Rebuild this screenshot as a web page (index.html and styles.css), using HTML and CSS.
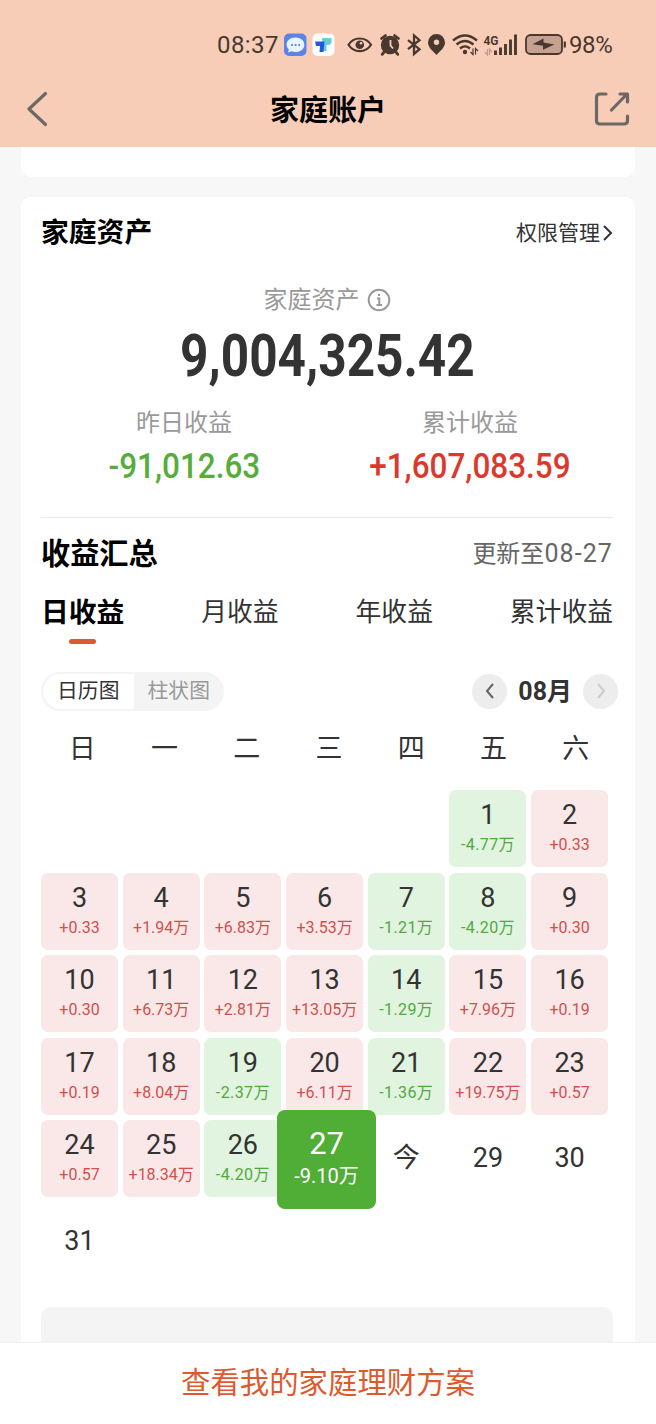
FILE: index.html
```
<!DOCTYPE html>
<html lang="zh-CN">
<head>
  <meta charset="UTF-8">
  <title>家庭账户</title>
  <link rel="stylesheet" href="styles.css">
</head>
<body>
  <header class="header">
    <div class="status">
      <span class="time">08:37</span>
      <svg width="62" height="30" viewBox="280 30 62 30">
        <rect x="284" y="33.5" width="22.5" height="22.5" rx="5" fill="#5b84e8"/>
        <path d="M295.5 37.5c5.200 0 8.800 3 8.800 7.200s-3.600 7.300-8.800 7.300c-1.500 0-2.900-.2-4.100-.7l-3.400 1.100.9-3.100c-1.500-1.200-2.300-2.800-2.300-4.600 0-4.200 3.700-7.200 8.900-7.200z" fill="#e9f4ff"/>
        <g fill="#4d79dd"><circle cx="292" cy="45" r="1"/><circle cx="295.600" cy="45" r="1"/><circle cx="299.200" cy="45" r="1"/></g>
        <rect x="312.500" y="33.500" width="22" height="22.500" rx="5" fill="#fff"/>
        <path d="M322 38h9.500v4.500l-2 2.500h-3v6h-3.500z" fill="#63cdd8"/>
        <path d="M315 41.500h9.500l-1 10.500h-4l.5-6h-4z" fill="#2458dc"/>
      </svg>
      <svg width="61" height="30" viewBox="342 30 61 30">
        <path d="M348.500 44.800c5-8.400 17.500-8.400 22.500 0-5 8.400-17.500 8.400-22.500 0z" fill="none" stroke="#4a382f" stroke-width="2.200"/>
        <circle cx="359.800" cy="44.800" r="4.300" fill="#4a382f"/>
        <circle cx="361" cy="43.200" r="1.300" fill="#f7cdb8"/>
        <circle cx="390" cy="45" r="9.200" fill="#4a382f"/>
        <path d="M381.500 38.500l4-3M398.500 38.500l-4-3M384.500 51.500l-2.300 2.800M395.500 51.500l2.300 2.800" stroke="#4a382f" stroke-width="2.800" stroke-linecap="round"/>
        <path d="M390.500 40v5.500l2.500 3" fill="none" stroke="#f7cdb8" stroke-width="1.800"/>
      </svg>
      <svg width="45" height="30" viewBox="403 30 45 30">
        <path d="M408 40.200l11.500 9-5.500 4.700V35.500l5.500 4.700-11.500 9" fill="none" stroke="#4a382f" stroke-width="2.300"/>
        <path fill-rule="evenodd" d="M436.500 55c-3.700-4-8.500-7.500-8.500-12.500a8.500 8.500 0 0 1 17 0c0 5-4.800 8.500-8.500 12.500zm0-10a2.700 2.700 0 1 0 0-5.400 2.700 2.700 0 0 0 0 5.400z" fill="#4a382f"/>
      </svg>
      <svg width="32" height="30" viewBox="448 30 32 30">
        <path d="M453 40.500q12-10 24 0M456.500 44.500q8.500-7 17 0M460 48.500q5-4.200 10 0" fill="none" stroke="#4a382f" stroke-width="2.300"/>
        <circle cx="465" cy="52" r="2.200" fill="#4a382f"/>
        <path d="M473 48.500v6l-2.500-2.500M475.500 54.500v-6l2.500 2.500" fill="none" stroke="#4a382f" stroke-width="1.200"/>
      </svg>
      <svg width="40" height="30" viewBox="480 30 40 30">
        <text class="net" x="483.500" y="44.500" textLength="15" lengthAdjust="spacingAndGlyphs">4G</text>
        <path d="M487.500 49v6l-2.500-3M489.500 55v-6l2.500 3" fill="none" stroke="#c49b88" stroke-width="1.200"/>
        <path d="M495.500 55v-4.500M500.500 55v-7.500M505.500 55V44M510.500 55V39.500M515.500 55V34.500" stroke="#4a382f" stroke-width="2.900"/>
      </svg>
      <svg width="49" height="30" viewBox="520 30 49 30">
        <rect x="526" y="35" width="36" height="19" rx="4.500" fill="#c4a191" stroke="#4a382f" stroke-width="1.800"/>
        <path d="M564.800 41.500v6" stroke="#4a382f" stroke-width="2.200"/>
        <path d="M532.500 44.200l11-5.700v4l11 2-11.500 5.200v-4z" fill="#4a382f"/>
      </svg>
      <span class="battery">98%</span>
    </div>
    <div class="nav">
      <svg class="back" width="22" height="36" viewBox="0 0 22 36"><path d="M19.500 2.500L3 18l16.500 15.500" /></svg>
      <h1>家庭账户</h1>
      <svg class="share" width="36" height="36" viewBox="0 0 36 36"><path d="M12 3H6Q2.500 3 2.500 6.500v23Q2.500 33 6 33h24q3.500 0 3.500-3.500V25M17.500 19L33 3M26 3h7.500v8"/></svg>
    </div>
  </header>

  <main class="content">
    <section class="card-prev"></section>
    <section class="card">
      <div class="card-title">
        <h2>家庭资产</h2>
        <a class="manage"><span>权限管理</span><svg width="11" height="18" viewBox="0 0 11 18"><path d="M2 2l7 7-7 7"/></svg></a>
      </div>

      <div class="total-label"><span>家庭资产</span>
        <svg width="24" height="24" viewBox="0 0 24 24"><circle cx="12" cy="12" r="10.300"/><path d="M10 10.500h2.300V17M9.500 17h5.500M11 7h2"/></svg>
      </div>
      <div class="total"><span>9,004,325.42</span></div>
      <div class="profits">
        <div>
          <p>昨日收益</p>
          <strong class="down">-91,012.63</strong>
        </div>
        <div>
          <p>累计收益</p>
          <strong class="up">+1,607,083.59</strong>
        </div>
      </div>

      <div class="summary-title">
        <h2>收益汇总</h2>
        <span>更新至<b>08-27</b></span>
      </div>
      <div class="tabs">
        <span class="active">日收益</span>
        <span>月收益</span>
        <span>年收益</span>
        <span>累计收益</span>
      </div>

      <div class="tools">
        <div class="toggle">
          <span class="on">日历图</span>
          <span>柱状图</span>
        </div>
        <div class="month">
          <button><svg width="12" height="18" viewBox="0 0 12 18"><path d="M9 2L3 9l6 7"/></svg></button>
          <b>08月</b>
          <button class="disabled"><svg width="12" height="18" viewBox="0 0 12 18"><path d="M3 2l6 7-6 7"/></svg></button>
        </div>
      </div>

      <div class="week">
        <span>日</span><span>一</span><span>二</span><span>三</span><span>四</span><span>五</span><span>六</span>
      </div>
      <div class="calendar">
        <div class="day loss first"><b>1</b><i>-4.77万</i></div>
        <div class="day gain"><b>2</b><i>+0.33</i></div>

        <div class="day gain"><b>3</b><i>+0.33</i></div>
        <div class="day gain"><b>4</b><i>+1.94万</i></div>
        <div class="day gain"><b>5</b><i>+6.83万</i></div>
        <div class="day gain"><b>6</b><i>+3.53万</i></div>
        <div class="day loss"><b>7</b><i>-1.21万</i></div>
        <div class="day loss"><b>8</b><i>-4.20万</i></div>
        <div class="day gain"><b>9</b><i>+0.30</i></div>

        <div class="day gain"><b>10</b><i>+0.30</i></div>
        <div class="day gain"><b>11</b><i>+6.73万</i></div>
        <div class="day gain"><b>12</b><i>+2.81万</i></div>
        <div class="day gain"><b>13</b><i>+13.05万</i></div>
        <div class="day loss"><b>14</b><i>-1.29万</i></div>
        <div class="day gain"><b>15</b><i>+7.96万</i></div>
        <div class="day gain"><b>16</b><i>+0.19</i></div>

        <div class="day gain"><b>17</b><i>+0.19</i></div>
        <div class="day gain"><b>18</b><i>+8.04万</i></div>
        <div class="day loss"><b>19</b><i>-2.37万</i></div>
        <div class="day gain"><b>20</b><i>+6.11万</i></div>
        <div class="day loss"><b>21</b><i>-1.36万</i></div>
        <div class="day gain"><b>22</b><i>+19.75万</i></div>
        <div class="day gain"><b>23</b><i>+0.57</i></div>

        <div class="day gain"><b>24</b><i>+0.57</i></div>
        <div class="day gain"><b>25</b><i>+18.34万</i></div>
        <div class="day loss"><b>26</b><i>-4.20万</i></div>
        <div class="day"><div class="selected"><b>27</b><i>-9.10万</i></div></div>
        <div class="day empty"><b>今</b></div>
        <div class="day empty"><b>29</b></div>
        <div class="day empty"><b>30</b></div>

        <div class="day empty"><b>31</b></div>
      </div>
      <div class="next-box"></div>
    </section>
  </main>

  <footer class="footer">查看我的家庭理财方案</footer>
</body>
</html>
```
FILE: styles.css
```
* {
  box-sizing: border-box;
}
body {
  margin: 0;
  height: 1424px;
  display: flex;
  flex-direction: column;
  overflow: hidden;
  background-color: #f7f7f7;
  color: #333;
  font-family: Roboto, "Noto Sans CJK SC", sans-serif;
}
h1, h2, p {
  margin: 0;
}
svg {
  display: block;
  flex: none;
}
.header {
  height: 147px;
  flex: none;
  background-color: #f7cdb8;
}
.status {
  height: 72px;
  padding: 18px 43px 0 0;
  display: flex;
  align-items: center;
  justify-content: flex-end;
  color: #4a382f;
  font-size: 24px;
  font-weight: 400;
}
.time {
  width: 63px;
  letter-spacing: 0.4px;
}
.battery {
  width: 44px;
  font-size: 24px;
  letter-spacing: -0.4px;
}
.net {
  font: 700 13px Roboto, sans-serif;
  fill: #4a382f;
}
.nav {
  height: 74px;
  padding: 0 26px;
  display: flex;
  align-items: center;
  justify-content: space-between;
}
.nav h1 {
  color: #000;
  font-size: 29px;
  font-weight: 700;
  padding: 0 0 2px 14px;
}
.nav path {
  fill: none;
  stroke: #6b6865;
  stroke-width: 3.2;
  stroke-linecap: round;
  stroke-linejoin: round;
}
.content {
  flex: 1;
  min-height: 0;
  padding: 0 21px;
  overflow: hidden;
}
.card-prev {
  height: 30px;
  background-color: #fff;
  border-radius: 0 0 10px 10px;
}
.card {
  height: 1200px;
  margin-top: 20px;
  padding: 0 22px 0 20px;
  background-color: #fff;
  border-radius: 10px;
}
.card-title {
  height: 71px;
  display: flex;
  align-items: center;
  justify-content: space-between;
}
.card h2 {
  color: #000;
  font-size: 27.8px;
  line-height: 40px;
}
.manage {
  display: flex;
  align-items: center;
  gap: 2px;
  font-size: 21px;
}
.manage span {
  padding-bottom: 3px;
}
.manage path {
  fill: none;
  stroke: #333;
  stroke-width: 2;
}
.total-label {
  height: 63px;
  display: flex;
  align-items: center;
  justify-content: center;
  gap: 7px;
  color: #999;
  font-size: 24px;
}
.total-label span {
  padding-bottom: 4px;
}
.total-label svg {
  fill: none;
  stroke: #999;
  stroke-width: 2;
}
.total {
  height: 50px;
  line-height: 50px;
  text-align: center;
  font-size: 59px;
  font-weight: 700;
}
.total span {
  display: inline-block;
  transform: scaleX(0.84);
}
.profits {
  height: 137px;
  padding-top: 24px;
  display: flex;
  border-bottom: 1px solid #ebebeb;
}
.profits div {
  width: 286px;
  text-align: center;
}
.profits p {
  color: #999;
  font-size: 24px;
  line-height: 36px;
}
.profits strong {
  display: inline-block;
  font-size: 35px;
  font-weight: 500;
  line-height: 51px;
  transform: scaleX(0.9);
}
.down {
  color: #56ad3c;
}
.up {
  color: #da3a2c;
}
.summary-title {
  height: 71px;
  display: flex;
  align-items: center;
  justify-content: space-between;
  color: #666;
  font-size: 24px;
}
.summary-title h2 {
  font-size: 29.2px;
}
.summary-title span {
  padding-bottom: 5px;
}
.summary-title b {
  font-size: 25px;
  font-weight: 400;
  letter-spacing: 1.1px;
}
.tabs {
  height: 59px;
  display: flex;
  justify-content: space-between;
  font-size: 25.8px;
  line-height: 47px;
}
.tabs .active {
  color: #000;
  font-size: 27.8px;
  font-weight: 700;
}
.tabs .active::after {
  content: "";
  display: block;
  width: 27px;
  height: 5px;
  margin: 3px auto 0;
  border-radius: 3px;
  background-color: #dc5a32;
}
.tools {
  height: 68px;
  padding-top: 10px;
  margin-top: 4px;
  margin-right: -5px;
  display: flex;
  align-items: center;
  justify-content: space-between;
}
.toggle {
  width: 183px;
  height: 39px;
  padding: 2px 0 2px 2px;
  display: flex;
  border-radius: 20px;
  background-color: #f4f4f4;
  color: #999;
  font-size: 20.8px;
  line-height: 34px;
}
.toggle span {
  flex: 1;
  text-align: center;
}
.toggle .on {
  background-color: #fff;
  border-radius: 18px 0 0 18px;
  color: #333;
}
.month {
  display: flex;
  align-items: center;
  gap: 11px;
  font-size: 25px;
}
.month b {
  padding-bottom: 4px;
}
.month button {
  width: 35px;
  height: 35px;
  padding: 0;
  border: 0;
  border-radius: 50%;
  background-color: #ededed;
  display: flex;
  align-items: center;
  justify-content: center;
}
.month path {
  fill: none;
  stroke: #666;
  stroke-width: 2;
}
.month .disabled path {
  stroke: #ccc;
}
.week {
  height: 50px;
  margin-top: 4px;
  margin-right: -4px;
  display: grid;
  grid-template-columns: repeat(7, 1fr);
  text-align: center;
  font-size: 27px;
  line-height: 50px;
}
.calendar {
  margin-top: 16px;
  display: grid;
  grid-template-columns: repeat(7, 77px);
  grid-auto-rows: 77px;
  gap: 5.6px 4.7px;
}
.first {
  grid-column-start: 6;
}
.day {
  position: relative;
  padding-top: 9px;
  border-radius: 7px;
  text-align: center;
}
.day b {
  display: block;
  font-size: 27px;
  font-weight: 400;
  line-height: 32px;
}
.day i {
  display: block;
  font-size: 16px;
  font-style: normal;
  line-height: 28px;
  white-space: nowrap;
}
.gain {
  background-color: #fae7e8;
}
.gain i {
  color: #d2504c;
}
.loss {
  background-color: #e0f4df;
}
.loss i {
  color: #54a83e;
  letter-spacing: 0.4px;
}
.empty {
  padding-top: 22px;
}
.day .selected {
  position: absolute;
  left: -9px;
  top: -10px;
  z-index: 1;
  width: 99px;
  height: 99px;
  padding-top: 16px;
  border-radius: 8px;
  background-color: #50ad35;
  color: #fff;
}
.selected b {
  font-size: 31px;
  line-height: 36px;
}
.selected i {
  font-size: 20px;
}
.next-box {
  height: 100px;
  margin-top: 27px;
  border-radius: 10px;
  background-color: #f4f4f4;
}
.footer {
  height: 82px;
  flex: none;
  background-color: #fff;
  border-top: 1px solid #f2f2f2;
  color: #dc5a2d;
  font-size: 29.4px;
  line-height: 80px;
  text-align: center;
}
```
